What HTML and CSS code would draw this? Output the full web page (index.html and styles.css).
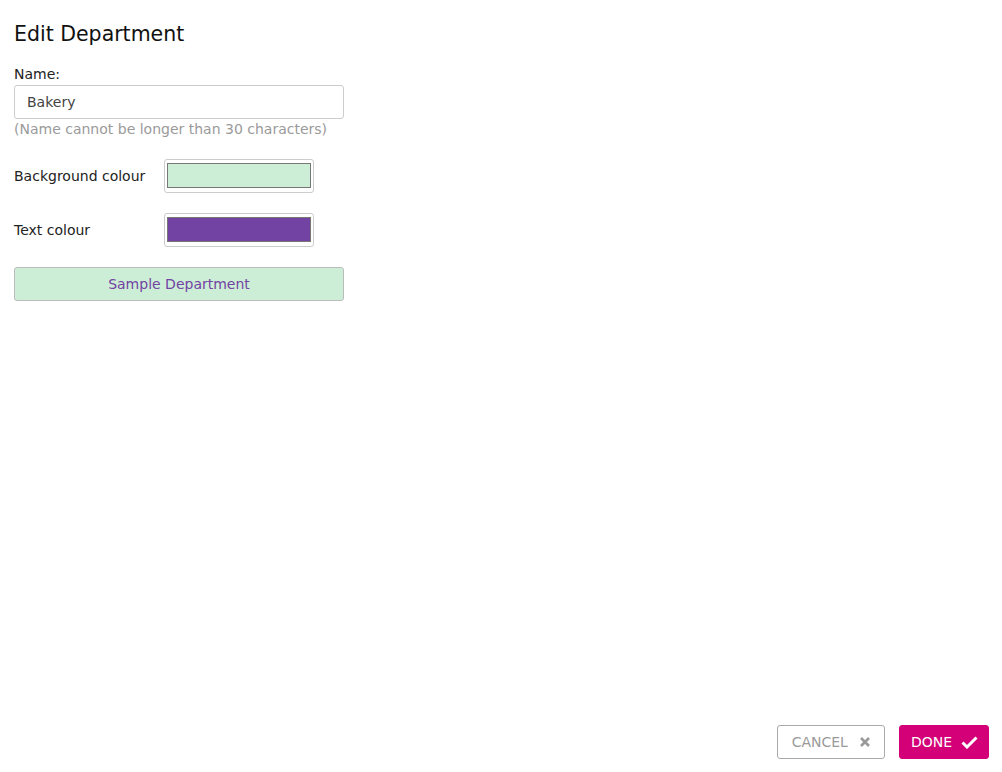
FILE: index.html
```html
<!DOCTYPE html>
<html lang="en">
<head>
  <meta charset="UTF-8">
  <title>Edit Department</title>
  <link rel="stylesheet" href="styles.css">
</head>
<body>
  <div class="dialog">
    <div class="content">
      <h1>Edit Department</h1>

      <label class="field-label" for="name">Name:</label>
      <input type="text" id="name" class="text-input" value="Bakery">
      <div class="hint">(Name cannot be longer than 30 characters)</div>

      <div class="colour-row">
        <span class="colour-label">Background colour</span>
        <span class="swatch"><span class="swatch-fill bg-fill"></span></span>
      </div>

      <div class="colour-row">
        <span class="colour-label">Text colour</span>
        <span class="swatch"><span class="swatch-fill text-fill"></span></span>
      </div>

      <div class="sample">Sample Department</div>
    </div>

    <div class="actions">
      <button class="btn btn-cancel">CANCEL
        <svg width="12" height="12" viewBox="0 0 12 12"><path d="M2 2 L10 10 M10 2 L2 10" stroke="#9a9a9a" stroke-width="2.6"/></svg>
      </button>
      <button class="btn btn-done">DONE
        <svg width="17" height="13" viewBox="0 0 17 13"><path d="M1.5 6.5 L6 11 L15.5 1.5" fill="none" stroke="#fff" stroke-width="3"/></svg>
      </button>
    </div>
  </div>
</body>
</html>
```

FILE: styles.css
```css
* {
  margin: 0;
  padding: 0;
  box-sizing: border-box;
  font-family: "DejaVu Sans", sans-serif;
}

body {
  background-color: #fff;
  color: #222;
}

.dialog {
  display: flex;
  flex-direction: column;
  justify-content: space-between;
  min-height: 772px;
  padding: 22px 13px 13px 14px;
}

.content {
  width: 330px;
}

h1 {
  font-size: 20.5px;
  line-height: 24px;
  font-weight: normal;
  color: #111;
  margin-bottom: 20px;
}

.field-label {
  display: block;
  font-size: 14px;
  line-height: 17px;
  margin-bottom: 2px;
}

.text-input {
  width: 330px;
  height: 34px;
  border: 1px solid #ccc;
  border-radius: 3px;
  padding: 0 12px;
  font-size: 14px;
  color: #444;
  outline: none;
}

.hint {
  font-size: 14px;
  line-height: 17px;
  color: #9a9a9a;
  margin-top: 2px;
  margin-bottom: 21px;
}

.colour-row {
  display: flex;
  align-items: center;
  margin-bottom: 20px;
}

.colour-label {
  width: 150px;
  font-size: 14px;
}

.swatch {
  display: flex;
  width: 150px;
  height: 34px;
  border: 1px solid #ccc;
  border-radius: 3px;
  padding: 3px 2px 4px 2px;
}

.swatch-fill {
  flex: 1;
  border: 1px solid #777;
}

.bg-fill {
  background-color: #cdeed6;
}

.text-fill {
  background-color: #7243a3;
}

.sample {
  height: 34px;
  line-height: 32px;
  text-align: center;
  border: 1px solid #bbb;
  border-radius: 3px;
  background-color: #cdeed6;
  color: #7243a3;
  font-size: 14px;
}

.actions {
  display: flex;
  justify-content: flex-end;
  gap: 14px;
}

.btn {
  display: flex;
  align-items: center;
  gap: 11px;
  height: 34px;
  border-radius: 3px;
  font-size: 14px;
  padding: 0 13px 0 14px;
  cursor: pointer;
}

.btn-cancel {
  background-color: #fff;
  border: 1px solid #aaa;
  color: #9a9a9a;
}

.btn-done {
  background-color: #d30077;
  border: 1px solid #d30077;
  color: #fff;
  gap: 9px;
  padding: 0 10px 0 11px;
}
```
